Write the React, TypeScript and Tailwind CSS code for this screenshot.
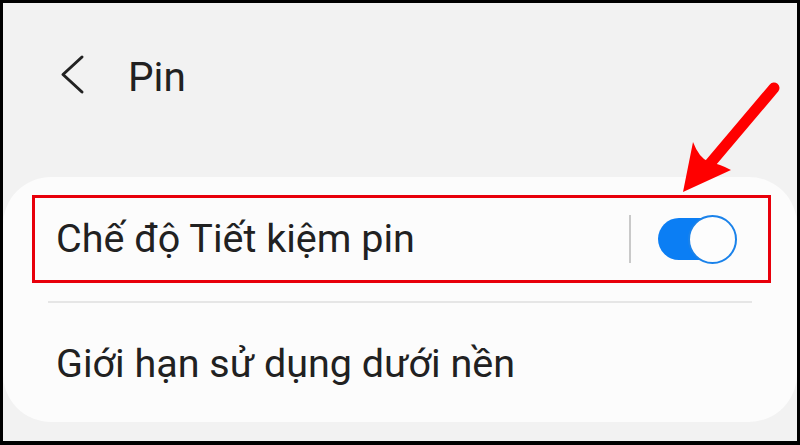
import React from 'react';

function Toggle() {
  return (
    <div className="flex h-[42px] w-[72px] items-center justify-end rounded-full bg-[#0b7ef4]">
      <div className="-mr-[7px] h-[49px] w-[49px] shrink-0 rounded-full border-2 border-[#1a82ea] bg-[#fdfdfd]" />
    </div>
  );
}

export default function App() {
  return (
    <div
      className="relative flex h-[445px] w-[800px] flex-col overflow-hidden border-t-[3px] border-r-[3px] border-b-[4px] border-l-[3px] border-black bg-[#f2f2f2] text-[#212121]"
      style={{ fontFamily: 'Roboto, "Noto Sans", sans-serif' }}
    >
      {/* header */}
      <div className="flex h-[174px] shrink-0 items-start pl-[57px] pt-[50px]">
        <svg width="26" height="42" viewBox="0 0 26 42" className="mt-[1px]">
          <polyline
            points="22,3 3,20.5 22,38"
            fill="none"
            stroke="#222"
            strokeWidth="3"
            strokeLinecap="round"
            strokeLinejoin="round"
          />
        </svg>
        <span className="ml-[42px] text-[40.5px] leading-[48px]">Pin</span>
      </div>

      {/* card */}
      <div className="flex h-[245px] shrink-0 flex-col rounded-[48px] bg-[#fcfcfc] pt-[18px]">
        <div className="ml-[29px] mr-[26px] flex h-[88px] items-center border-[3px] border-[#e8000b] pl-[21px] pr-[38px]">
          <span className="flex-1 text-[39.5px] leading-[48px]">Chế độ Tiết kiệm pin</span>
          <div className="mr-[27px] h-[48px] w-[2px] bg-[#c9c9c9]" />
          <Toggle />
        </div>
        <div className="mx-[45px] mt-[18px] h-[2px] bg-[#e6e6e6]" />
        <div className="pl-[53px] pt-[37px] text-[39.5px] leading-[48px]">Giới hạn sử dụng dưới nền</div>
      </div>

      {/* annotation arrow */}
      <svg className="pointer-events-none absolute left-[-3px] top-[-3px]" width="800" height="445" viewBox="0 0 800 445">
        <line x1="774" y1="88" x2="708" y2="166" stroke="#ff0000" strokeWidth="11" strokeLinecap="round" />
        <path d="M683,192 L693,142 Q699,158 709,162 Q720,164 731,170 Z" fill="#ff0000" />
      </svg>
    </div>
  );
}
